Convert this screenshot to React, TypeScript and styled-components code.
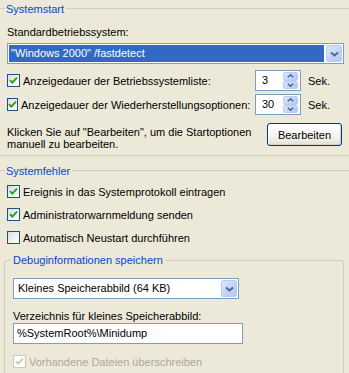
import React from 'react';
import styled, { createGlobalStyle } from 'styled-components';

const GlobalStyle = createGlobalStyle`
    html, body {
        margin: 0;
        padding: 0;
        background: #ECE9D8;
    }
    body {
        width: 349px;
        height: 373px;
        overflow: hidden;
        font-family: "Liberation Sans", Arial, sans-serif;
        font-size: 11px;
        color: #000;
    }
`;

const Page = styled.div`
    width: 349px;
    height: 373px;
    overflow: hidden;
`;

const Group = styled.section<{ $gapTop?: number }>`
    margin-top: ${p => p.$gapTop || 0}px;
    border-bottom: 1px solid #D0D0BF;
    padding-bottom: 5px;
`;

const OpenGroup = styled.section<{ $gapTop?: number }>`
    margin-top: ${p => p.$gapTop || 0}px;
`;

const GroupHeader = styled.div`
    display: flex;
    height: 18px;
    line-height: 18px;
    color: #0046D5;

    &::before, &::after {
        content: '';
        height: 1px;
        margin-top: 8px;
        background: #D0D0BF;
    }
    &::before {
        width: 5px;
        margin-right: 1px;
    }
    &::after {
        flex: 1;
        margin-left: 2px;
    }
`;

const Label = styled.div<{ $top?: number; $left?: number }>`
    margin-top: ${p => p.$top || 0}px;
    margin-left: ${p => p.$left ?? 7}px;
    line-height: 13px;
    white-space: nowrap;
`;

const ComboBox = styled.div<{ $width: number; $top?: number; $left?: number }>`
    display: flex;
    box-sizing: border-box;
    width: ${p => p.$width}px;
    height: 21px;
    margin-top: ${p => p.$top || 0}px;
    margin-left: ${p => p.$left ?? 7}px;
    padding: 1px;
    border: 1px solid #7F9DB9;
    background: #fff;
`;

const ComboValue = styled.div<{ $selected?: boolean }>`
    flex: 1;
    margin-right: 2px;
    padding-left: ${p => (p.$selected ? 2 : 3)}px;
    line-height: 17px;
    white-space: nowrap;
    overflow: hidden;
    background: ${p => (p.$selected ? '#316AC5' : 'transparent')};
    color: ${p => (p.$selected ? '#fff' : '#000')};
`;

const ArrowButton = styled.div<{ $half?: boolean }>`
    display: flex;
    align-items: center;
    justify-content: center;
    box-sizing: border-box;
    width: ${p => (p.$half ? 15 : 16)}px;
    height: ${p => (p.$half ? 8.5 : 17)}px;
    border: 1px solid #BACBF3;
    border-radius: 2px;
    background: linear-gradient(135deg, #DCE6FD 0%, #C3D4FB 55%, #B1C6F6 100%);
`;

const SpinBox = styled.div`
    display: flex;
    box-sizing: border-box;
    width: 46px;
    height: 21px;
    padding: 1px 2px 1px 1px;
    border: 1px solid #7F9DB9;
    background: #fff;
`;

const SpinValue = styled.div`
    flex: 1;
    padding-left: 5px;
    line-height: 17px;
`;

const SpinButtons = styled.div`
    display: flex;
    flex-direction: column;
    justify-content: space-between;
    height: 17px;
`;

const OptionGrid = styled.div`
    display: grid;
    grid-template-columns: 241px 46px 1fr;
    column-gap: 7px;
    row-gap: 3px;
    margin-top: 6px;
    padding-left: 7px;
    align-items: center;
`;

const CheckRow = styled.label<{ $disabled?: boolean; $top?: number }>`
    display: flex;
    align-items: center;
    height: 21px;
    margin-top: ${p => p.$top || 0}px;
    white-space: nowrap;
    color: ${p => (p.$disabled ? '#ACA899' : '#000')};
`;

const Box = styled.span<{ $disabled?: boolean }>`
    display: flex;
    align-items: center;
    justify-content: center;
    box-sizing: border-box;
    width: 13px;
    height: 13px;
    margin-right: 3px;
    border: 1px solid ${p => (p.$disabled ? '#CAC8BB' : '#1C5180')};
    background: ${p => (p.$disabled
        ? '#fff'
        : 'linear-gradient(135deg, #DCDCD7 0%, #F2F2EF 60%, #fff 100%)')};
`;

const CheckList = styled.div`
    display: flex;
    flex-direction: column;
    gap: 2px;
    margin-top: 1px;
    padding-left: 7px;
`;

const EditRow = styled.div`
    display: flex;
    align-items: flex-start;
    margin-top: 8px;
    padding: 0 7px;
`;

const Hint = styled.p`
    width: 250px;
    margin: 3px 0 0;
    line-height: 12px;
`;

const PushButton = styled.button`
    box-sizing: border-box;
    width: 75px;
    height: 23px;
    margin-left: auto;
    padding: 0;
    border: 1px solid #003C74;
    border-radius: 3px;
    background: linear-gradient(#FFFFFF 0%, #F4F3EE 60%, #E4E1D6 100%);
    box-shadow: inset -1px -1px 0 #D6D0C5, inset 1px 1px 0 #fff;
    font: inherit;
    color: #000;
`;

const DebugSet = styled.fieldset`
    margin: 5px 5px 0 4px;
    padding: 11px 8px 0;
    border: 1px solid #D0D0BF;
    border-bottom: none;
    border-radius: 3px 3px 0 0;
    min-height: 120px;
`;

const DebugLegend = styled.legend`
    margin-left: -2px;
    padding: 0 2px;
    line-height: 14px;
    color: #0046D5;
`;

const TextField = styled.div`
    box-sizing: border-box;
    width: 230px;
    height: 21px;
    padding-left: 3px;
    border: 1px solid #7F9DB9;
    background: #fff;
    line-height: 19px;
`;

const Chevron = () => (
    <svg width="9" height="6" viewBox="0 0 9 6">
        <path d="M1 1.5 L4.5 4.5 L8 1.5" fill="none" stroke="#4D6185" strokeWidth="1.8" />
    </svg>
);

const SmallChevron = ({ dir }: { dir: 'up' | 'down' }) => (
    <svg width="7" height="4" viewBox="0 0 7 4">
        <path
            d={dir === 'down' ? 'M0.8 0.8 L3.5 3.2 L6.2 0.8' : 'M0.8 3.2 L3.5 0.8 L6.2 3.2'}
            fill="none"
            stroke="#4D6185"
            strokeWidth="1.4"
        />
    </svg>
);

const Check = ({ checked, disabled }: { checked: boolean; disabled?: boolean }) => (
    <Box $disabled={disabled}>
        {checked && (
            <svg width="9" height="9" viewBox="0 0 9 9">
                <path
                    d="M1 4.2 L3.3 6.6 L8 1.6"
                    fill="none"
                    stroke={disabled ? '#CAC8BB' : '#21A121'}
                    strokeWidth="1.9"
                />
            </svg>
        )}
    </Box>
);

const Combo = ({ value, width, selected, top, left }: {
    value: string; width: number; selected?: boolean; top?: number; left?: number;
}) => (
    <ComboBox $width={width} $top={top} $left={left}>
        <ComboValue $selected={selected}>{value}</ComboValue>
        <ArrowButton><Chevron /></ArrowButton>
    </ComboBox>
);

const Spinner = ({ value }: { value: string }) => (
    <SpinBox>
        <SpinValue>{value}</SpinValue>
        <SpinButtons>
            <ArrowButton $half><SmallChevron dir="up" /></ArrowButton>
            <ArrowButton $half><SmallChevron dir="down" /></ArrowButton>
        </SpinButtons>
    </SpinBox>
);

const App = () => (
    <Page>
        <GlobalStyle />
        <Group>
            <GroupHeader>Systemstart</GroupHeader>
            <Label $top={8}>Standardbetriebssystem:</Label>
            <Combo value={'"Windows 2000" /fastdetect'} width={337} selected top={4} />
            <OptionGrid>
                <CheckRow><Check checked />Anzeigedauer der Betriebssystemliste:</CheckRow>
                <Spinner value="3" />
                <span>Sek.</span>
                <CheckRow><Check checked />Anzeigedauer der Wiederherstellungsoptionen:</CheckRow>
                <Spinner value="30" />
                <span>Sek.</span>
            </OptionGrid>
            <EditRow>
                <Hint>Klicken Sie auf "Bearbeiten", um die Startoptionen manuell zu bearbeiten.</Hint>
                <PushButton>Bearbeiten</PushButton>
            </EditRow>
        </Group>
        <OpenGroup $gapTop={6}>
            <GroupHeader>Systemfehler</GroupHeader>
            <CheckList>
                <CheckRow><Check checked />Ereignis in das Systemprotokoll eintragen</CheckRow>
                <CheckRow><Check checked />Administratorwarnmeldung senden</CheckRow>
                <CheckRow><Check checked={false} />Automatisch Neustart durchführen</CheckRow>
            </CheckList>
            <DebugSet>
                <DebugLegend>Debuginformationen speichern</DebugLegend>
                <Combo value="Kleines Speicherabbild (64 KB)" width={226} left={0} />
                <Label $top={11} $left={0}>Verzeichnis für kleines Speicherabbild:</Label>
                <TextField>%SystemRoot%\Minidump</TextField>
                <CheckRow $disabled $top={7}>
                    <Check checked disabled />Vorhandene Dateien überschreiben
                </CheckRow>
            </DebugSet>
        </OpenGroup>
    </Page>
);

export default App;
